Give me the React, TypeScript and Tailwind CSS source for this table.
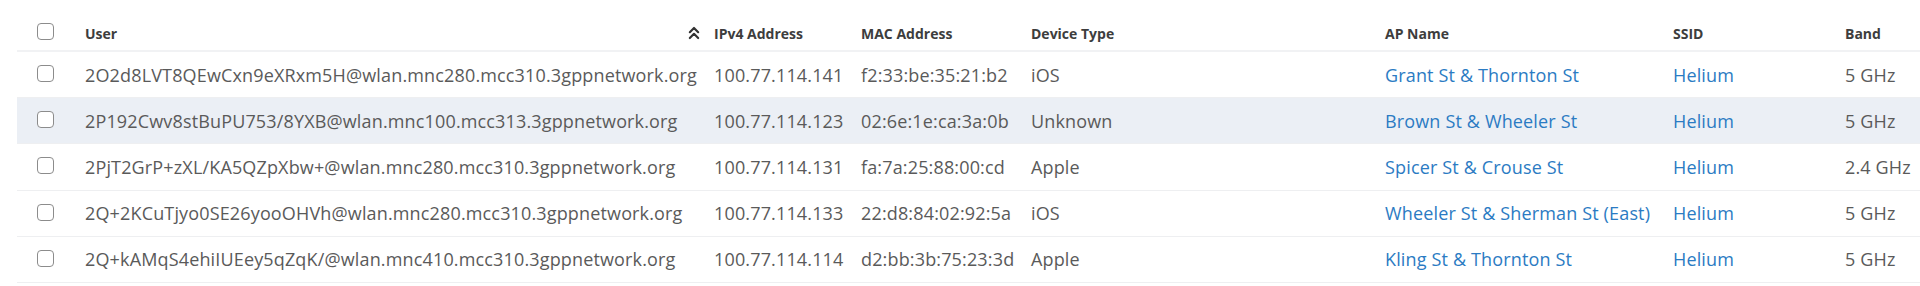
import React from "react";
import { ChevronsUp } from "lucide-react";

type Client = {
  user: string;
  ip: string;
  mac: string;
  device: string;
  ap: string;
  ssid: string;
  band: string;
};

const CLIENTS: Client[] = [
  {
    user: "2O2d8LVT8QEwCxn9eXRxm5H@wlan.mnc280.mcc310.3gppnetwork.org",
    ip: "100.77.114.141",
    mac: "f2:33:be:35:21:b2",
    device: "iOS",
    ap: "Grant St & Thornton St",
    ssid: "Helium",
    band: "5 GHz",
  },
  {
    user: "2P192Cwv8stBuPU753/8YXB@wlan.mnc100.mcc313.3gppnetwork.org",
    ip: "100.77.114.123",
    mac: "02:6e:1e:ca:3a:0b",
    device: "Unknown",
    ap: "Brown St & Wheeler St",
    ssid: "Helium",
    band: "5 GHz",
  },
  {
    user: "2PjT2GrP+zXL/KA5QZpXbw+@wlan.mnc280.mcc310.3gppnetwork.org",
    ip: "100.77.114.131",
    mac: "fa:7a:25:88:00:cd",
    device: "Apple",
    ap: "Spicer St & Crouse St",
    ssid: "Helium",
    band: "2.4 GHz",
  },
  {
    user: "2Q+2KCuTjyo0SE26yooOHVh@wlan.mnc280.mcc310.3gppnetwork.org",
    ip: "100.77.114.133",
    mac: "22:d8:84:02:92:5a",
    device: "iOS",
    ap: "Wheeler St & Sherman St (East)",
    ssid: "Helium",
    band: "5 GHz",
  },
  {
    user: "2Q+kAMqS4ehiIUEey5qZqK/@wlan.mnc410.mcc310.3gppnetwork.org",
    ip: "100.77.114.114",
    mac: "d2:bb:3b:75:23:3d",
    device: "Apple",
    ap: "Kling St & Thornton St",
    ssid: "Helium",
    band: "5 GHz",
  },
];

const GRID =
  "grid grid-cols-[68px_629px_147px_170px_354px_288px_172px_1fr]";

const Checkbox: React.FC = () => (
  <span className="block w-[17px] h-[17px] rounded-[4px] border-[1.5px] border-[#8c8c8c] bg-white" />
);

const App: React.FC = () => {
  return (
    <div
      className="w-[1920px] h-[286px] bg-white overflow-hidden"
      style={{ fontFamily: '"Open Sans", "Liberation Sans", sans-serif' }}
    >
      <div className="ml-[17px]">
        <div className={`${GRID} h-[52px] pt-[24px] border-b-2 border-[#f1f2f4] text-[14px] leading-[20px] font-bold text-[#3d3d3d]`}>
          <div className="pl-[20px] -mt-[1px]">
            <Checkbox />
          </div>
          <div className="flex justify-between pr-[10px]">
            <span>User</span>
            <ChevronsUp className="w-[20px] h-[20px] -mt-[1px] text-[#333]" strokeWidth={2.6} />
          </div>
          <div>IPv4 Address</div>
          <div>MAC Address</div>
          <div>Device Type</div>
          <div>AP Name</div>
          <div>SSID</div>
          <div>Band</div>
        </div>

        {CLIENTS.map((c, i) => (
          <div
            key={c.user}
            className={`${GRID} h-[46.2px] items-center border-b border-[#eeeff1] text-[18px] leading-[24px] tracking-[0.15px] text-[#5a5a5a] whitespace-nowrap ${
              i === 1 ? "bg-[#ebeff5]" : "bg-white"
            }`}
          >
            <div className="pl-[20px] -mt-[2px]">
              <Checkbox />
            </div>
            <div>{c.user}</div>
            <div>{c.ip}</div>
            <div>{c.mac}</div>
            <div>{c.device}</div>
            <div className="text-[#2b7bc3]">{c.ap}</div>
            <div className="text-[#2b7bc3]">{c.ssid}</div>
            <div>{c.band}</div>
          </div>
        ))}
      </div>
    </div>
  );
};

export default App;
